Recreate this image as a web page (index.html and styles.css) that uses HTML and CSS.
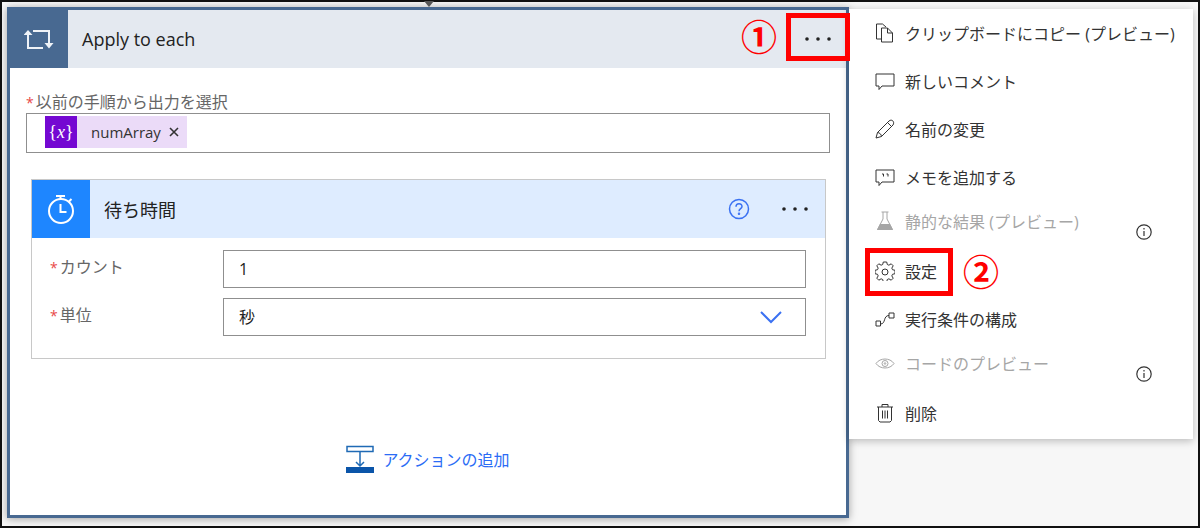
FILE: index.html
```html
<!DOCTYPE html>
<html lang="ja">
<head>
	<meta charset="utf-8" />
	<meta name="viewport" content="width=device-width, initial-scale=1" />
	<title>Apply to each</title>
	<link rel="stylesheet" href="styles.css">
</head>
<body>
	<main class="canvas">
		<svg class="connector" width="12" height="8" viewBox="0 0 12 8"><path d="M1 0h10L6 6z" fill="#555"/></svg>

		<section class="card">
			<header class="card-header">
				<div class="card-icon">
					<svg width="30" height="22" viewBox="0 0 30 22" fill="none" stroke="#eef2f7" stroke-width="2">
						<path d="M9 3h16v13M19 20H4V6"/>
						<path d="M-.500 7L4 2l4.500 5zM20.500 15h9L25 20.500z" fill="#eef2f7" stroke="none"/>
					</svg>
				</div>
				<h1>Apply to each</h1>
				<div class="callout-anchor">
					<button class="more" aria-label="メニュー">
						<svg width="28" height="4" viewBox="0 0 28 4" fill="#222"><circle cx="3" cy="2" r="1.800"/><circle cx="14" cy="2" r="1.800"/><circle cx="25" cy="2" r="1.800"/></svg>
					</button>
					<span class="callout-box"></span>
					<span class="callout-number before">①</span>
				</div>
			</header>

			<div class="card-body">
				<label class="field-label" for="source"><span class="required">*</span>以前の手順から出力を選択</label>
				<div class="token-box">
					<span class="token">
						<span class="token-icon">{<i>x</i>}</span>
						<span class="token-name">numArray</span>
						<button class="token-remove" aria-label="削除">
							<svg width="10" height="10" viewBox="0 0 10 10" stroke="#333" stroke-width="1.600"><path d="M1 1l8 8M9 1L1 9"/></svg>
						</button>
					</span>
					<input id="source" type="text">
				</div>

				<section class="step">
					<header class="step-header">
						<div class="step-icon">
							<svg width="30" height="32" viewBox="0 0 30 32" fill="none" stroke="#fff" stroke-width="2">
								<circle cx="15" cy="18" r="12"/>
								<path d="M10 3h9M14.500 3v4M22.500 9l3-3M14.500 11v8h6"/>
							</svg>
						</div>
						<h2>待ち時間</h2>
						<button class="help" aria-label="ヘルプ">
							<svg width="22" height="22" viewBox="0 0 22 22" fill="none" stroke="#3b71f2" stroke-width="1.500">
								<circle cx="11" cy="11" r="9.500"/>
								<path d="M8 8.800c0-4 6-4 6-.400 0 2.200-3 2.300-3 4.800"/>
								<circle cx="11" cy="15.800" r=".500"/>
							</svg>
						</button>
						<button class="more" aria-label="メニュー">
							<svg width="28" height="4" viewBox="0 0 28 4" fill="#222"><circle cx="3" cy="2" r="1.800"/><circle cx="14" cy="2" r="1.800"/><circle cx="25" cy="2" r="1.800"/></svg>
						</button>
					</header>
					<div class="step-fields">
						<label class="field-label" for="count"><span class="required">*</span>カウント</label>
						<input id="count" type="text" value="1">
						<label class="field-label" for="unit"><span class="required">*</span>単位</label>
						<div class="select">
							<select id="unit">
								<option>秒</option>
							</select>
							<svg width="22" height="14" viewBox="0 0 22 14" fill="none" stroke="#3b71f2" stroke-width="2"><path d="M1 2l10 10L21 2"/></svg>
						</div>
					</div>
				</section>

				<button class="add-action">
					<svg width="28" height="28" viewBox="0 0 28 28" fill="none" stroke="#1f6ab5" stroke-width="1.500">
						<path d="M1 1.500h26v5H1zM14 7v14M10 17l4 4 4-4"/>
						<path d="M0 22h28v6H0z" fill="#0b55a9" stroke="none"/>
					</svg>
					アクションの追加
				</button>
			</div>
		</section>

		<ul class="menu">
			<li>
				<button>
					<svg viewBox="0 0 20 20"><path d="M6 16H1.500V1h6L11 4M6.500 5h6l5 5v9h-11zM12.500 5v5h5"/></svg>
					<span>クリップボードにコピー (プレビュー)</span>
				</button>
			</li>
			<li>
				<button>
					<svg viewBox="0 0 20 20"><path d="M1 3h18v12H7l-3 3.500V15H1z"/></svg>
					<span>新しいコメント</span>
				</button>
			</li>
			<li>
				<button>
					<svg viewBox="0 0 20 20"><path d="M1 19l1.500-5.500L14 2c3-2.500 6 1 4 4L6.500 17.500zM2.500 13.500c2 0 4 2 4 4M12.500 3.500l4 4"/></svg>
					<span>名前の変更</span>
				</button>
			</li>
			<li>
				<button>
					<svg viewBox="0 0 20 20"><path d="M1 3h18v12H7l-3 3.500V15H1z"/><path d="M7 7h1.500v2.500M11.500 7h1.500v2.500"/></svg>
					<span>メモを追加する</span>
				</button>
			</li>
			<li class="disabled">
				<button disabled>
					<svg viewBox="0 0 20 20"><path d="M6.500 1h7M8 1v7L2.500 18.500h15L12 8V1"/><path d="M5 13h10l3 6H2z" fill="currentColor" stroke="none"/></svg>
					<span>静的な結果 (プレビュー)</span>
				</button>
				<svg class="info" viewBox="0 0 18 18"><circle cx="9" cy="9" r="7.200"/><path d="M9 8v5M9 5v1.500"/></svg>
			</li>
			<li class="callout-anchor">
				<button>
					<svg viewBox="0 0 20 20">
						<path d="M8.300 1h3.400l.6 2.500 1.600.700 2.300-1.400 2 2-1.400 2.300.700 1.600 2.500.6v3.400l-2.500.6-.700 1.600 1.400 2.300-2 2-2.300-1.400-1.600.700-.6 2.500H8.300l-.6-2.500-1.600-.700-2.300 1.400-2-2 1.400-2.300-.700-1.600L0 12.700V9.300l2.500-.6.700-1.600-1.400-2.300 2-2 2.300 1.400 1.600-.700z"/>
						<circle cx="10" cy="11" r="3"/>
					</svg>
					<span>設定</span>
				</button>
				<span class="callout-box"></span>
				<span class="callout-number after">②</span>
			</li>
			<li>
				<button>
					<svg viewBox="0 0 20 20"><path d="M1 12h4.500v5H1zM14 4h5v5h-5zM5.500 15C11 15 8 6.500 14 6.500"/></svg>
					<span>実行条件の構成</span>
				</button>
			</li>
			<li class="disabled">
				<button disabled>
					<svg viewBox="0 0 20 20"><path d="M1 10.500c4-6 14-6 18 0-4 6-14 6-18 0z"/><circle cx="10" cy="10.500" r="3"/><circle cx="10" cy="10.500" r=".800"/></svg>
					<span>コードのプレビュー</span>
				</button>
				<svg class="info" viewBox="0 0 18 18"><circle cx="9" cy="9" r="7.200"/><path d="M9 8v5M9 5v1.500"/></svg>
			</li>
			<li>
				<button>
					<svg viewBox="0 0 20 20"><path d="M2 4h16M7 4V1.500h6V4M3.500 4v13.500l1.500 1.500h10l1.500-1.500V4M7.500 7.500v8M10 7.500v8M12.500 7.500v8"/></svg>
					<span>削除</span>
				</button>
			</li>
		</ul>
	</main>
</body>
</html>
```
FILE: styles.css
```css
* {
	box-sizing: border-box;
}
body {
	margin: 0;
	font-family: "Open Sans", "Noto Sans CJK JP", sans-serif;
	font-size: 16px;
	color: #333;
}
button, input, select {
	font: inherit;
	color: inherit;
}
button {
	display: flex;
	align-items: center;
	padding: 0;
	border: 0;
	background: none;
}
h1, h2 {
	flex: 1;
	margin: 0;
	font-size: 18px;
	font-weight: normal;
	color: #222;
}
svg {
	display: block;
	flex: none;
}

.canvas {
	position: relative;
	display: flex;
	align-items: flex-start;
	min-height: 100vh;
	padding: 5px;
	border: 2px solid #111;
	background-color: #f7f7f7;
}
.connector {
	position: absolute;
	top: -1px;
	left: 421px;
}

/* Loop card */
.card {
	flex: 1;
	border: 3px solid #486991;
	background-color: #fff;
	box-shadow: 0 1px 8px rgba(0, 0, 0, 0.35);
}
.card-header {
	display: flex;
	align-items: center;
	height: 58px;
	background-color: #e4e9f0;
}
.card-icon, .step-icon {
	display: flex;
	align-items: center;
	justify-content: center;
	width: 58px;
	height: 58px;
	margin-right: 14px;
	background-color: #486991;
}
.card-header .callout-anchor {
	margin-right: 1px;
}
.card-header .more {
	width: 54px;
	height: 38px;
}
.more {
	justify-content: center;
}
.card-body {
	padding: 24px 16px 42px;
}
.field-label {
	display: block;
	line-height: 21px;
	color: #666;
}
.required {
	margin-right: 2px;
	font-size: 14px;
	color: #e84848;
}
.token-box {
	display: flex;
	height: 40px;
	padding: 2px 18px;
	border: 1px solid #8f8f8f;
}
.token-box input {
	flex: 1;
	min-width: 0;
	border: 0;
	outline: 0;
}
.token {
	display: flex;
	align-items: center;
	height: 32px;
	padding-right: 8px;
	background-color: #ebdbf8;
}
.token-icon {
	width: 32px;
	margin-right: 14px;
	font-family: "Liberation Serif", serif;
	font-size: 18px;
	line-height: 32px;
	text-align: center;
	color: #fff;
	background-color: #7408d2;
}
.token-name {
	font-size: 15px;
}
.token-remove {
	margin-left: 8px;
}

/* Delay step */
.step {
	margin: 26px 4px 0 5px;
	border: 1px solid #c8c8c8;
}
.step-header {
	display: flex;
	align-items: center;
	height: 58px;
	padding-right: 16px;
	background-color: #deecff;
}
.step-icon {
	background-color: #1e86ff;
}
.help {
	margin-right: 31px;
}
.step-fields {
	display: grid;
	grid-template-columns: 173px 1fr;
	row-gap: 10px;
	padding: 12px 19px 22px 18px;
}
.step-fields .field-label {
	line-height: 34px;
}
.step-fields input, .step-fields select {
	width: 100%;
	height: 38px;
	padding: 0 15px;
	border: 1px solid #8f8f8f;
	border-radius: 0;
	background-color: #fff;
	color: #222;
}
.select {
	position: relative;
}
.select select {
	appearance: none;
}
.select svg {
	position: absolute;
	top: 12px;
	right: 24px;
	pointer-events: none;
}
.add-action {
	gap: 8px;
	margin: 86px auto 0;
	color: #2b6cf5;
}

/* Context menu */
.menu {
	width: 344px;
	margin: 2px 0 0;
	padding: 0 0 2px;
	list-style: none;
	background-color: #fff;
	box-shadow: 0 2px 8px rgba(0, 0, 0, 0.25);
}
.menu li {
	display: flex;
	align-items: center;
	justify-content: space-between;
	height: 48px;
	padding: 0 40px 0 26px;
}
.menu button {
	gap: 10px;
	white-space: nowrap;
}
.menu svg {
	width: 20px;
	height: 20px;
	fill: none;
	stroke: currentColor;
	stroke-width: 1;
}
.menu .disabled {
	height: 46px;
	padding-bottom: 6px;
}
.menu .disabled button {
	color: #a6a6a6;
}
.menu .info {
	width: 18px;
	height: 18px;
	align-self: flex-end;
	stroke-width: 1.2;
}

/* Numbered callouts */
.callout-anchor {
	position: relative;
}
.callout-box {
	position: absolute;
	inset: -7px -5px -3px;
	border: 5px solid #f00;
	pointer-events: none;
}
.callout-number {
	position: absolute;
	top: -3px;
	font-family: "Noto Sans CJK JP", sans-serif;
	font-size: 36px;
	font-weight: bold;
	line-height: 36px;
	color: #f00;
}
.before {
	right: 68px;
}
.after {
	top: 5px;
	left: 114px;
}
.menu .callout-box {
	inset: 1px 240px -1px 16px;
}
```
